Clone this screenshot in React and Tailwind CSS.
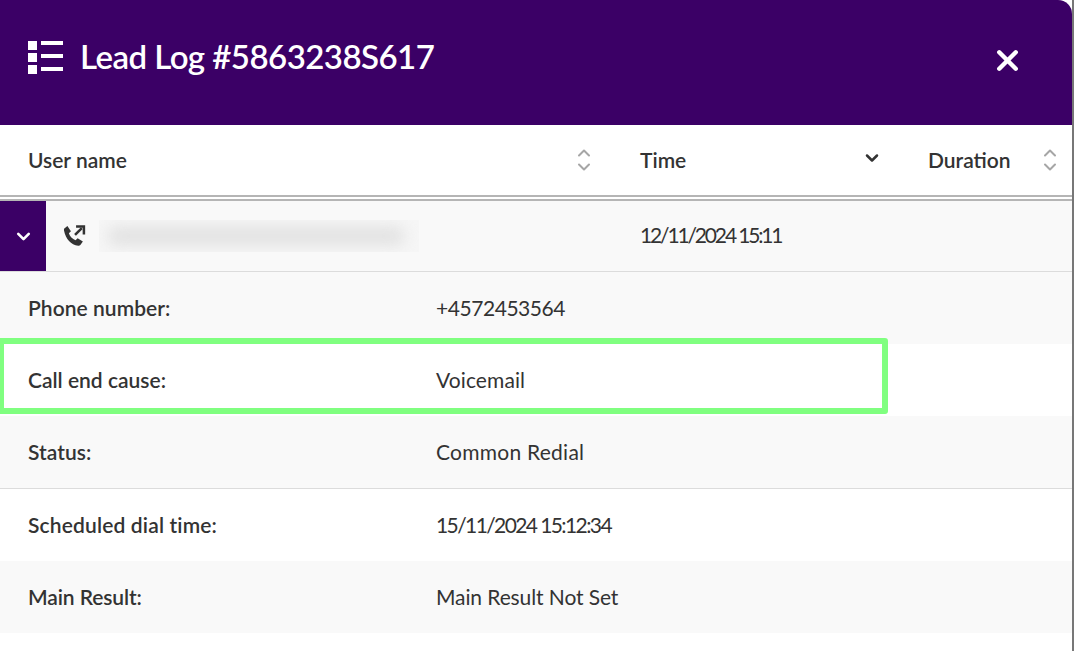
import React from 'react';
import { ChevronDown, ChevronUp, X } from 'lucide-react';

const rows = [
  { label: 'Phone number:', value: '+4572453564', bg: 'bg-[#f9f9f9]', h: 'h-[72px]', lt: 'tracking-[0.05px]', vt: 'tracking-[-0.45px]' },
  { label: 'Call end cause:', value: 'Voicemail', bg: 'bg-white', h: 'h-[72px]', lt: 'tracking-[0px]', vt: 'tracking-[0.1px]' },
  { label: 'Status:', value: 'Common Redial', bg: 'bg-[#f9f9f9] border-b border-[#dcdcdc]', h: 'h-[73px]', lt: 'tracking-[0.05px]', vt: 'tracking-[0.25px]' },
  { label: 'Scheduled dial time:', value: '15/11/2024 15:12:34', bg: 'bg-white', h: 'h-[72px]', lt: 'tracking-[0.15px]', vt: 'tracking-[-1.6px]' },
  { label: 'Main Result:', value: 'Main Result Not Set', bg: 'bg-[#f9f9f9]', h: 'h-[72px]', lt: 'tracking-[-0.1px]', vt: 'tracking-[-0.1px]' },
];

function SortIcon() {
  return (
    <div className="flex flex-col items-center text-[#a6a6a6]">
      <ChevronUp className="-mb-[3px] h-[20px] w-[20px]" strokeWidth={2.4} />
      <ChevronDown className="-mt-[3px] h-[20px] w-[20px]" strokeWidth={2.4} />
    </div>
  );
}

function ListIcon() {
  return (
    <svg width="36" height="36" viewBox="0 0 36 36" fill="#fff" className="shrink-0">
      <rect x="0" y="1" width="9" height="9" />
      <rect x="0" y="13" width="9" height="9" />
      <rect x="0" y="25" width="9" height="9" />
      <rect x="13" y="1" width="22" height="4" />
      <rect x="13" y="14" width="22" height="4" />
      <rect x="13" y="27" width="22" height="4" />
    </svg>
  );
}

function PhoneIcon() {
  return (
    <svg width="23" height="23" viewBox="0 0 22 22" fill="#333">
      <path d="M1 3.600 4.200 1 7.600 6 5.600 8c.9 2.900 3.400 5.500 6.400 6.600l2-2 5 3.300-2.400 3.300c-.5.600-1.200.800-2 .700C7.500 18.900 2.700 13.600 1 5.500c-.1-.7-.1-1.400 0-1.900Z" />
      <path d="M11.500 9.500 18 3" stroke="#333" strokeWidth="2.400" fill="none" />
      <path d="M12.500 1.500H20V9" stroke="#333" strokeWidth="2.400" fill="none" />
    </svg>
  );
}

export default function App() {
  return (
    <div className="relative h-[651px] w-[1074px] overflow-hidden bg-white font-['Lato',sans-serif] text-[#333]">
      <div className="mr-[2px] flex h-[125px] items-center justify-between rounded-tr-[14px] bg-[#3b0066] pl-[28px] pr-[48px] text-white">
        <div className="flex items-center gap-[16px] pb-[9px]">
          <ListIcon />
          <h1 className="-mt-[3px] text-[33px] font-semibold leading-none tracking-[-0.55px]">Lead Log #5863238S617</h1>
        </div>
        <X className="mb-[5px] h-[33px] w-[33px]" strokeWidth={3.2} />
      </div>

      <div className="mr-[2px] flex h-[72px] items-center border-b-2 border-[#b5b5b5] text-[21px] font-semibold">
        <div className="flex w-[600px] items-center justify-between pl-[28px] pr-[6px]">
          <span>User name</span>
          <SortIcon />
        </div>
        <div className="flex w-[288px] items-center justify-between pl-[40px] pr-[6px]">
          <span>Time</span>
          <ChevronDown className="mb-[4px] h-[20px] w-[20px]" strokeWidth={3} />
        </div>
        <div className="flex flex-1 items-center justify-between pl-[40px] pr-[12px]">
          <span>Duration</span>
          <SortIcon />
        </div>
      </div>

      <div className="mr-[2px] mt-[2px] flex h-[73px] items-stretch border-b border-t-2 border-[#dcdcdc] border-t-[#b5b5b5] bg-[#f9f9f9]">
        <div className="flex w-[46px] items-center justify-center bg-[#3b0066] text-white">
          <ChevronDown className="h-[21px] w-[21px]" strokeWidth={3} />
        </div>
        <div className="flex w-[554px] items-center pl-[17px]">
          <PhoneIcon />
          <div className="ml-[13px] flex h-[32px] w-[320px] items-center overflow-hidden bg-[#f6f6f6] pl-[8px] pr-[14px]">
            <div className="h-[20px] w-full rounded-full bg-[#e3e3e3] blur-[7px]" />
          </div>
        </div>
        <div className="flex items-center pb-[2px] pl-[40px] text-[21px] tracking-[-2.15px]">12/11/2024 15:11</div>
      </div>

      <div className="mr-[2px]">
        {rows.map((r) => (
          <div key={r.label} className={`flex items-center text-[21px] ${r.bg} ${r.h}`}>
            <div className={`w-[436px] pl-[28px] font-semibold ${r.lt}`}>{r.label}</div>
            <div className={r.vt}>{r.value}</div>
          </div>
        ))}
      </div>

      {/* annotation box drawn over the row */}
      <div className="absolute left-[-2px] top-[338px] h-[76px] w-[890px] rounded-[3px] border-[6px] border-[#80ff80]" />
      {/* window edge */}
      <div className="absolute right-0 top-0 h-full w-[2px] bg-[#777]" />
    </div>
  );
}
